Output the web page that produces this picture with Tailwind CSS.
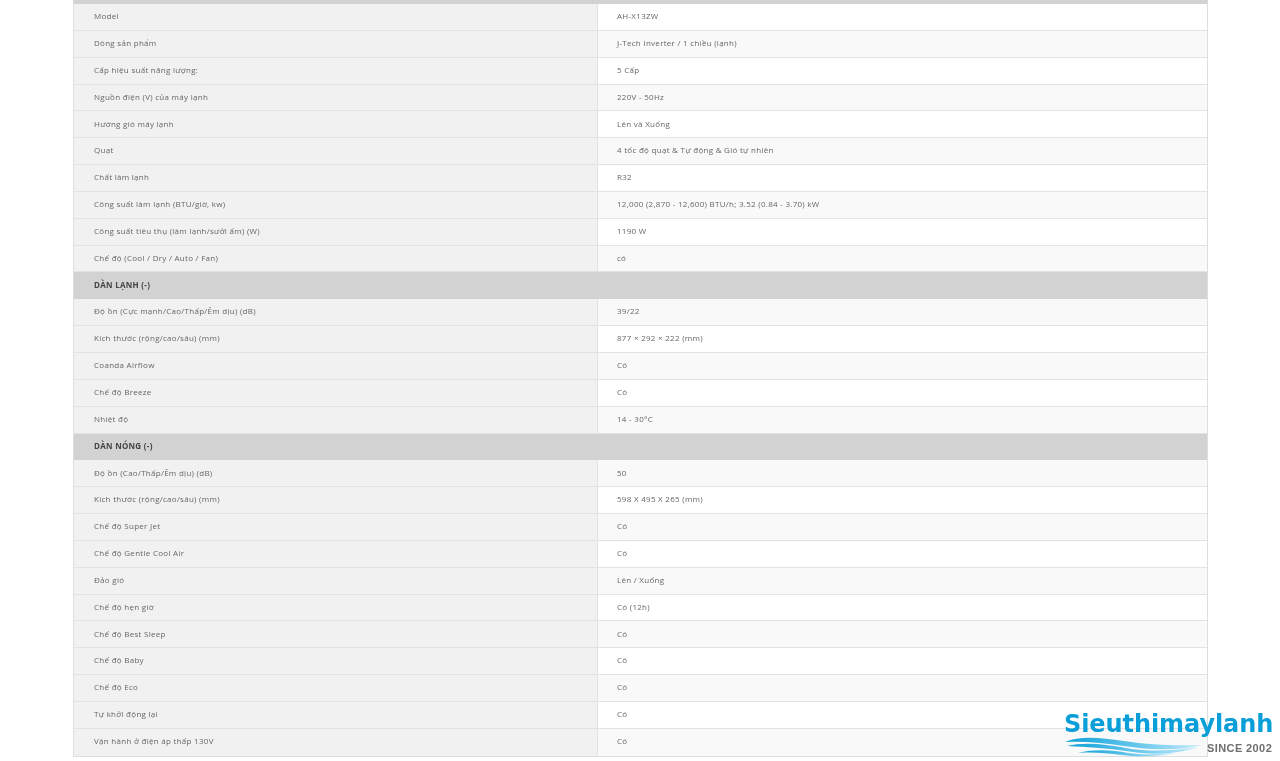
<!DOCTYPE html>
<html lang="vi">
<head>
    <meta charset="UTF-8">
    <title>Thông số kỹ thuật</title>
    <script src="https://cdn.jsdelivr.net/npm/@tailwindcss/browser@4"></script>
</head>
<body class="bg-white font-['Open_Sans','Noto_Sans',sans-serif] text-[8px] tracking-[0.28px] text-[#666] overflow-hidden">
    <div class="relative h-[761px] w-[1280px] overflow-hidden blur-[0.3px]">
        <!-- Spec table -->
        <div class="ml-[73px] w-[1135px] border-x border-[#dedede] border-t-[4px] border-t-[#d2d2d3] border-b border-b-[#dedede]">
            <div class="flex h-[26.85px] border-b border-[#e2e2e2]"><div class="flex w-[523px] items-center bg-[#f1f1f1] pb-[1.5px] pl-5">Model</div><div class="flex flex-1 items-center border-l border-[#e2e2e2] bg-white pb-[1.5px] pl-[19px]">AH-X13ZW</div></div>
            <div class="flex h-[26.85px] border-b border-[#e2e2e2]"><div class="flex w-[523px] items-center bg-[#f1f1f1] pb-[1.5px] pl-5">Dòng sản phẩm</div><div class="flex flex-1 items-center border-l border-[#e2e2e2] bg-[#f9f9f9] pb-[1.5px] pl-[19px]">J-Tech Inverter / 1 chiều (lạnh)</div></div>
            <div class="flex h-[26.85px] border-b border-[#e2e2e2]"><div class="flex w-[523px] items-center bg-[#f1f1f1] pb-[1.5px] pl-5">Cấp hiệu suất năng lượng:</div><div class="flex flex-1 items-center border-l border-[#e2e2e2] bg-white pb-[1.5px] pl-[19px]">5 Cấp</div></div>
            <div class="flex h-[26.85px] border-b border-[#e2e2e2]"><div class="flex w-[523px] items-center bg-[#f1f1f1] pb-[1.5px] pl-5">Nguồn điện (V) của máy lạnh</div><div class="flex flex-1 items-center border-l border-[#e2e2e2] bg-[#f9f9f9] pb-[1.5px] pl-[19px]">220V - 50Hz</div></div>
            <div class="flex h-[26.85px] border-b border-[#e2e2e2]"><div class="flex w-[523px] items-center bg-[#f1f1f1] pb-[1.5px] pl-5">Hướng gió máy lạnh</div><div class="flex flex-1 items-center border-l border-[#e2e2e2] bg-white pb-[1.5px] pl-[19px]">Lên và Xuống</div></div>
            <div class="flex h-[26.85px] border-b border-[#e2e2e2]"><div class="flex w-[523px] items-center bg-[#f1f1f1] pb-[1.5px] pl-5">Quạt</div><div class="flex flex-1 items-center border-l border-[#e2e2e2] bg-[#f9f9f9] pb-[1.5px] pl-[19px]">4 tốc độ quạt &amp; Tự động &amp; Gió tự nhiên</div></div>
            <div class="flex h-[26.85px] border-b border-[#e2e2e2]"><div class="flex w-[523px] items-center bg-[#f1f1f1] pb-[1.5px] pl-5">Chất làm lạnh</div><div class="flex flex-1 items-center border-l border-[#e2e2e2] bg-white pb-[1.5px] pl-[19px]">R32</div></div>
            <div class="flex h-[26.85px] border-b border-[#e2e2e2]"><div class="flex w-[523px] items-center bg-[#f1f1f1] pb-[1.5px] pl-5">Công suất làm lạnh (BTU/giờ, kw)</div><div class="flex flex-1 items-center border-l border-[#e2e2e2] bg-[#f9f9f9] pb-[1.5px] pl-[19px]">12,000 (2,870 - 12,600) BTU/h; 3.52 (0.84 - 3.70) kW</div></div>
            <div class="flex h-[26.85px] border-b border-[#e2e2e2]"><div class="flex w-[523px] items-center bg-[#f1f1f1] pb-[1.5px] pl-5">Công suất tiêu thụ (làm lạnh/sưởi ấm) (W)</div><div class="flex flex-1 items-center border-l border-[#e2e2e2] bg-white pb-[1.5px] pl-[19px]">1190 W</div></div>
            <div class="flex h-[26.85px] border-b border-[#e2e2e2]"><div class="flex w-[523px] items-center bg-[#f1f1f1] pb-[1.5px] pl-5">Chế độ (Cool / Dry / Auto / Fan)</div><div class="flex flex-1 items-center border-l border-[#e2e2e2] bg-[#f9f9f9] pb-[1.5px] pl-[19px]">có</div></div>
            <div class="flex h-[26.85px] items-center bg-[#d2d2d3] pb-[1.5px] pl-5 font-bold text-[#444]">DÀN LẠNH (-)</div>
            <div class="flex h-[26.85px] border-b border-[#e2e2e2]"><div class="flex w-[523px] items-center bg-[#f1f1f1] pb-[1.5px] pl-5">Độ ồn (Cực mạnh/Cao/Thấp/Êm dịu) (dB)</div><div class="flex flex-1 items-center border-l border-[#e2e2e2] bg-[#f9f9f9] pb-[1.5px] pl-[19px]">39/22</div></div>
            <div class="flex h-[26.85px] border-b border-[#e2e2e2]"><div class="flex w-[523px] items-center bg-[#f1f1f1] pb-[1.5px] pl-5">Kích thước (rộng/cao/sâu) (mm)</div><div class="flex flex-1 items-center border-l border-[#e2e2e2] bg-white pb-[1.5px] pl-[19px]">877 × 292 × 222 (mm)</div></div>
            <div class="flex h-[26.85px] border-b border-[#e2e2e2]"><div class="flex w-[523px] items-center bg-[#f1f1f1] pb-[1.5px] pl-5">Coanda Airflow</div><div class="flex flex-1 items-center border-l border-[#e2e2e2] bg-[#f9f9f9] pb-[1.5px] pl-[19px]">Có</div></div>
            <div class="flex h-[26.85px] border-b border-[#e2e2e2]"><div class="flex w-[523px] items-center bg-[#f1f1f1] pb-[1.5px] pl-5">Chế độ Breeze</div><div class="flex flex-1 items-center border-l border-[#e2e2e2] bg-white pb-[1.5px] pl-[19px]">Có</div></div>
            <div class="flex h-[26.85px] border-b border-[#e2e2e2]"><div class="flex w-[523px] items-center bg-[#f1f1f1] pb-[1.5px] pl-5">Nhiệt độ</div><div class="flex flex-1 items-center border-l border-[#e2e2e2] bg-[#f9f9f9] pb-[1.5px] pl-[19px]">14 - 30°C</div></div>
            <div class="flex h-[26.85px] items-center bg-[#d2d2d3] pb-[1.5px] pl-5 font-bold text-[#444]">DÀN NÓNG (-)</div>
            <div class="flex h-[26.85px] border-b border-[#e2e2e2]"><div class="flex w-[523px] items-center bg-[#f1f1f1] pb-[1.5px] pl-5">Độ ồn (Cao/Thấp/Êm dịu) (dB)</div><div class="flex flex-1 items-center border-l border-[#e2e2e2] bg-[#f9f9f9] pb-[1.5px] pl-[19px]">50</div></div>
            <div class="flex h-[26.85px] border-b border-[#e2e2e2]"><div class="flex w-[523px] items-center bg-[#f1f1f1] pb-[1.5px] pl-5">Kích thước (rộng/cao/sâu) (mm)</div><div class="flex flex-1 items-center border-l border-[#e2e2e2] bg-white pb-[1.5px] pl-[19px]">598 X 495 X 265 (mm)</div></div>
            <div class="flex h-[26.85px] border-b border-[#e2e2e2]"><div class="flex w-[523px] items-center bg-[#f1f1f1] pb-[1.5px] pl-5">Chế độ Super Jet</div><div class="flex flex-1 items-center border-l border-[#e2e2e2] bg-[#f9f9f9] pb-[1.5px] pl-[19px]">Có</div></div>
            <div class="flex h-[26.85px] border-b border-[#e2e2e2]"><div class="flex w-[523px] items-center bg-[#f1f1f1] pb-[1.5px] pl-5">Chế độ Gentle Cool Air</div><div class="flex flex-1 items-center border-l border-[#e2e2e2] bg-white pb-[1.5px] pl-[19px]">Có</div></div>
            <div class="flex h-[26.85px] border-b border-[#e2e2e2]"><div class="flex w-[523px] items-center bg-[#f1f1f1] pb-[1.5px] pl-5">Đảo gió</div><div class="flex flex-1 items-center border-l border-[#e2e2e2] bg-[#f9f9f9] pb-[1.5px] pl-[19px]">Lên / Xuống</div></div>
            <div class="flex h-[26.85px] border-b border-[#e2e2e2]"><div class="flex w-[523px] items-center bg-[#f1f1f1] pb-[1.5px] pl-5">Chế độ hẹn giờ</div><div class="flex flex-1 items-center border-l border-[#e2e2e2] bg-white pb-[1.5px] pl-[19px]">Có (12h)</div></div>
            <div class="flex h-[26.85px] border-b border-[#e2e2e2]"><div class="flex w-[523px] items-center bg-[#f1f1f1] pb-[1.5px] pl-5">Chế độ Best Sleep</div><div class="flex flex-1 items-center border-l border-[#e2e2e2] bg-[#f9f9f9] pb-[1.5px] pl-[19px]">Có</div></div>
            <div class="flex h-[26.85px] border-b border-[#e2e2e2]"><div class="flex w-[523px] items-center bg-[#f1f1f1] pb-[1.5px] pl-5">Chế độ Baby</div><div class="flex flex-1 items-center border-l border-[#e2e2e2] bg-white pb-[1.5px] pl-[19px]">Có</div></div>
            <div class="flex h-[26.85px] border-b border-[#e2e2e2]"><div class="flex w-[523px] items-center bg-[#f1f1f1] pb-[1.5px] pl-5">Chế độ Eco</div><div class="flex flex-1 items-center border-l border-[#e2e2e2] bg-[#f9f9f9] pb-[1.5px] pl-[19px]">Có</div></div>
            <div class="flex h-[26.85px] border-b border-[#e2e2e2]"><div class="flex w-[523px] items-center bg-[#f1f1f1] pb-[1.5px] pl-5">Tự khởi động lại</div><div class="flex flex-1 items-center border-l border-[#e2e2e2] bg-white pb-[1.5px] pl-[19px]">Có</div></div>
            <div class="flex h-[26.85px]"><div class="flex w-[523px] items-center bg-[#f1f1f1] pb-[1.5px] pl-5">Vận hành ở điện áp thấp 130V</div><div class="flex flex-1 items-center border-l border-[#e2e2e2] bg-[#f9f9f9] pb-[1.5px] pl-[19px]">Có</div></div>
        </div>

        <!-- Watermark logo -->
        <div class="absolute left-[1064px] top-[708px] h-[50px] w-[212px]">
            <div class="font-['DejaVu_Sans',sans-serif] text-[24px] leading-[32px] font-bold tracking-[-0.08px] text-[#0a9fd8]">Sieuthimaylanh</div>
            <svg class="absolute left-0 top-[28px]" width="140" height="21" viewBox="0 0 140 21">
                <defs>
                    <linearGradient id="wave" x1="0" x2="1" y1="0" y2="0">
                        <stop offset="0" stop-color="#0a9fd8"/>
                        <stop offset="0.55" stop-color="#6cc9ec"/>
                        <stop offset="1" stop-color="#c4ebfb"/>
                    </linearGradient>
                </defs>
                <path d="M1 6C15 0 35 1 60 5C85 9 115 10 138 9C115 15 85 14 60 10C40 7 20 5 1 6Z" fill="url(#wave)"/>
                <path d="M3 10C20 6 40 8 62 12C85 16 110 15 134 11C112 19 85 19 62 15C42 12 22 11 3 10Z" fill="url(#wave)"/>
                <path d="M14 17C30 13 48 14 64 17C78 19 95 19 114 16C95 21 75 21 58 19C42 17 28 16 14 17Z" fill="url(#wave)"/>
            </svg>
            <div class="absolute left-[143px] top-[33px] font-['Liberation_Sans',sans-serif] text-[11px] leading-[14px] font-bold tracking-[0.4px] text-[#6d6e70]">SINCE 2002</div>
        </div>
    </div>
</body>
</html>
